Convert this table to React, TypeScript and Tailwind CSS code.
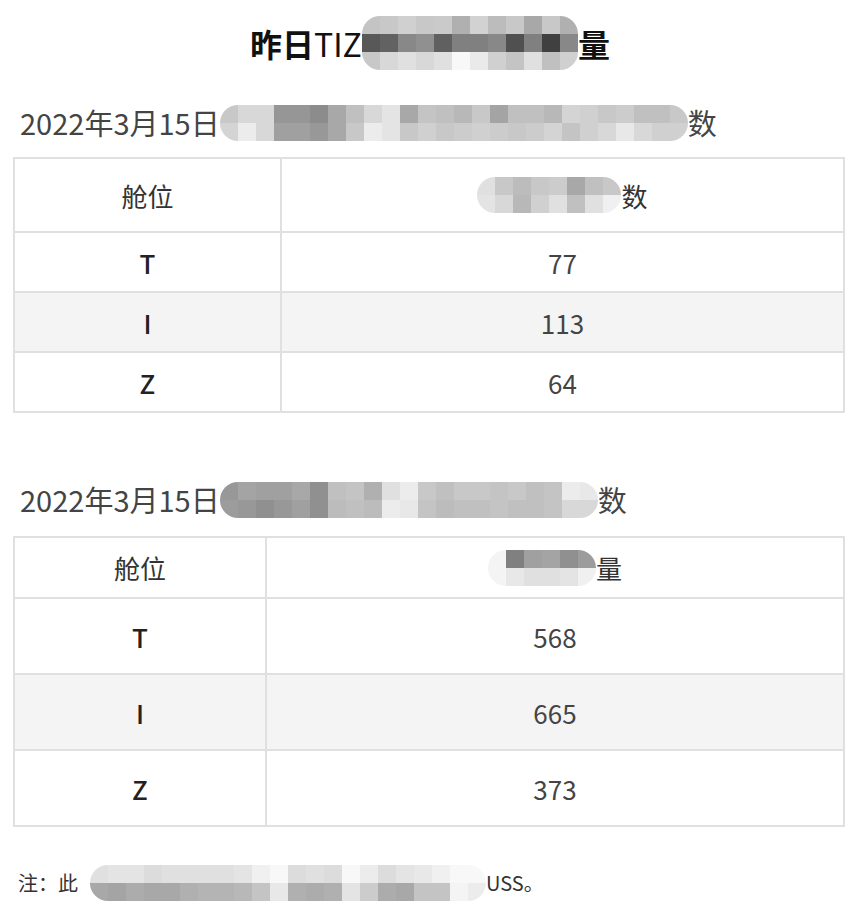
import React from 'react';

// grey levels of the blurred-out blocks, one string per row
type MosaicProps = { rows: string[]; cell?: number; className?: string };

function Mosaic({ rows, cell = 18, className = '' }: MosaicProps) {
  return (
    <span className={`inline-flex flex-col overflow-hidden rounded-[18px] shrink-0 ${className}`}>
      {rows.map((row, r) => (
        <span key={r} className="flex">
          {row.split(' ').map((g, i) => (
            <span key={i} style={{ width: cell, height: cell, backgroundColor: `#${g}${g}${g}` }} />
          ))}
        </span>
      ))}
    </span>
  );
}

const titleMosaic = [
  'c4 c8 d0 c8 ca b0 d2 bc c8 a8 c8 b0',
  '58 62 88 90 60 80 80 88 50 80 40 88',
  'c8 d8 e0 d8 e0 f8 ea d0 c4 e0 c0 d0'
];
const sub1Mosaic = [
  'c8 d8 d8 96 96 8c a8 c0 d8 e4 a8 c4 c0 b8 c8 a4 c0 c0 b8 d4 d0 c8 cc c0 c0 c8',
  'd4 ec d8 a0 a0 98 a8 c8 ec e4 c8 d0 c8 cc d0 cc c8 cc d4 c4 d0 d8 e8 d8 d0 d0'
];
const head1Mosaic = ['e0 c8 bc c8 cc a8 c0 c8', 'e4 d8 b8 d0 e0 c0 e0 f0'];
const sub2Mosaic = [
  '98 a4 a0 a0 a8 90 c0 c4 b0 e0 ec c8 c0 c8 c8 c4 c8 c0 c4 ec e8',
  '9c 98 90 98 a0 90 bc c0 bc ec e8 c4 bc c0 c0 c4 c0 c0 c4 d8 d8'
];
const head2Mosaic = ['f4 80 a0 a4 90 9c', 'f4 e8 e0 e0 e4 f0'];
const noteMosaic = [
  'e0 e4 e4 dc e0 e0 e0 e0 e4 f0 f8 dc e0 dc f8 ec dc e4 e8 f0 f8 f8',
  'a8 a4 ac a8 a8 b0 b4 b4 b8 c4 e8 b0 ac b0 e4 cc ac a8 c4 c4 f4 ec'
];

interface Row { cabin: string; value: number }

const table1: Row[] = [
  { cabin: 'T', value: 77 },
  { cabin: 'I', value: 113 },
  { cabin: 'Z', value: 64 }
];
const table2: Row[] = [
  { cabin: 'T', value: 568 },
  { cabin: 'I', value: 665 },
  { cabin: 'Z', value: 373 }
];

interface CabinTableProps {
  rows: Row[];
  firstCol: string;
  headH: string;
  rowH: string;
  header: React.ReactNode;
}

function CabinTable({ rows, firstCol, headH, rowH, header }: CabinTableProps) {
  return (
    <table className="w-[832px] border-collapse border-2 border-[#e0e0e0] text-[26px]">
      <tbody>
        <tr className={headH}>
          <td className={`${firstCol} border-2 border-[#e0e0e0] text-center text-[#333]`}>舱位</td>
          <td className="border-2 border-[#e0e0e0]">
            <div className="flex items-center justify-center text-[#333]">{header}</div>
          </td>
        </tr>
        {rows.map((row, i) => (
          <tr key={row.cabin} className={`${rowH} ${i === 1 ? 'bg-[#f4f4f4]' : 'bg-white'}`}>
            <td className="border-2 border-[#e0e0e0] text-center font-medium text-[#222]">{row.cabin}</td>
            <td className="border-2 border-[#e0e0e0] text-center text-[#444]">{row.value}</td>
          </tr>
        ))}
      </tbody>
    </table>
  );
}

export default function App() {
  return (
    <div className="min-h-screen bg-white pl-[13px] font-['Noto_Sans_CJK_SC',sans-serif]">
      <div className="mt-[16px] flex h-[54px] items-center justify-center pr-[14px] text-[32px] font-bold text-[#111]">
        <span>昨日</span>
        <span className="font-normal">TIZ</span>
        <Mosaic rows={titleMosaic} />
        <span>量</span>
      </div>

      <div className="mt-[33px] flex h-[40px] items-center pl-[7px] text-[29px] text-[#444]">
        <span>2022年3月15日</span>
        <Mosaic rows={sub1Mosaic} />
        <span>数</span>
      </div>

      <div className="mt-[14px]">
        <CabinTable
          rows={table1}
          firstCol="w-[267px]"
          headH="h-[74px]"
          rowH="h-[60px]"
          header={<><Mosaic rows={head1Mosaic} className="rounded-[4px]" /><span>数</span></>}
        />
      </div>

      <div className="mt-[67px] flex h-[40px] items-center pl-[7px] text-[29px] text-[#444]">
        <span>2022年3月15日</span>
        <Mosaic rows={sub2Mosaic} />
        <span>数</span>
      </div>

      <div className="mt-[16px]">
        <CabinTable
          rows={table2}
          firstCol="w-[252px]"
          headH="h-[61px]"
          rowH="h-[76px]"
          header={<><Mosaic rows={head2Mosaic} className="rounded-[4px]" /><span>量</span></>}
        />
      </div>

      <div className="mt-[36px] flex h-[40px] items-center pl-[5px] text-[20px] text-[#333]">
        <span>注：此</span>
        <Mosaic rows={noteMosaic} className="ml-[12px]" />
        <span>USS。</span>
      </div>
    </div>
  );
}
